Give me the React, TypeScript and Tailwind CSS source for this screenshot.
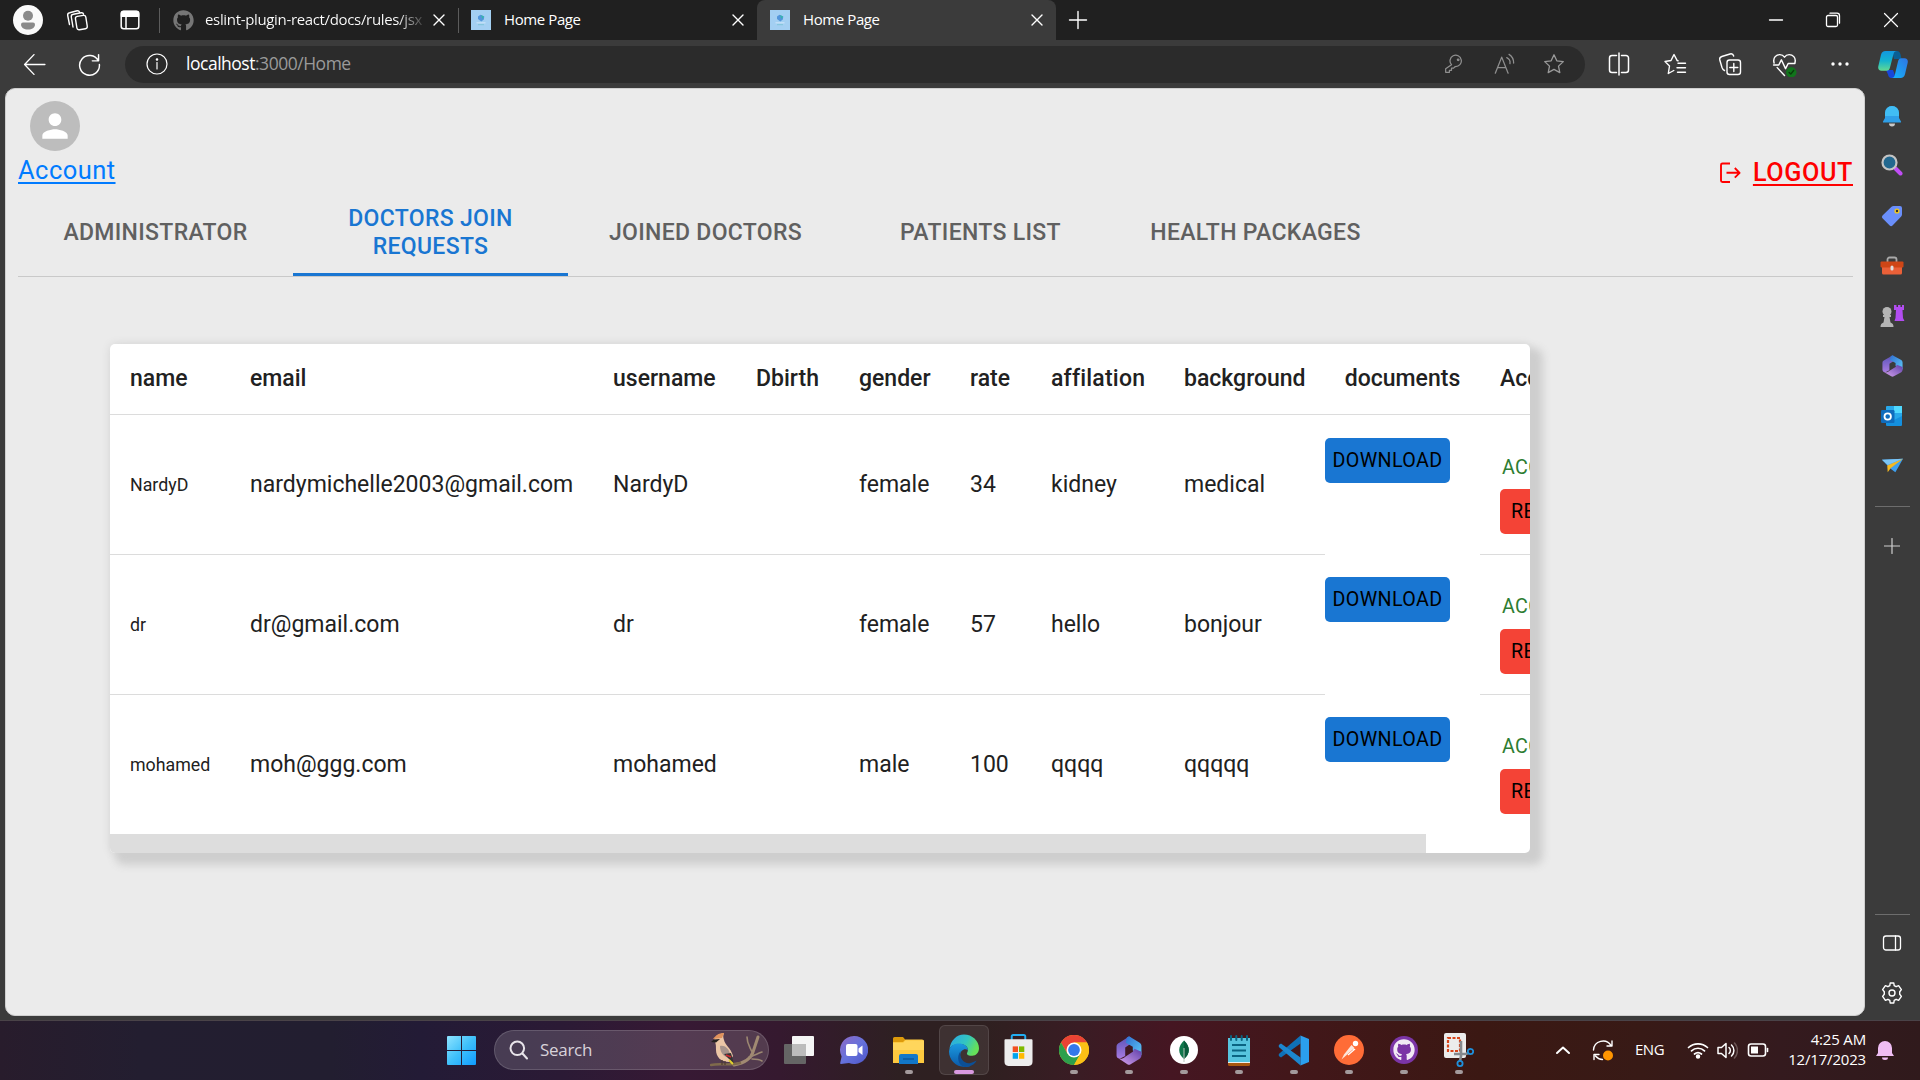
import React from 'react';
import { FaGithub } from 'react-icons/fa';
import { MdPerson } from 'react-icons/md';

type P = { children?: React.ReactNode; c?: string };

const I = ({ s = 24, vb = '0 0 24 24', w = 1.2, c = '#fff', children }: { s?: number; vb?: string; w?: number; c?: string; children: React.ReactNode }) => (
  <svg width={s} height={s} viewBox={vb} fill="none" stroke={c} strokeWidth={w} strokeLinecap="round" strokeLinejoin="round" className="block shrink-0">
    {children}
  </svg>
);

const F = ({ w = 30, h = 30, vb, children }: { w?: number; h?: number; vb?: string; children: React.ReactNode }) => (
  <svg width={w} height={h} viewBox={vb || `0 0 ${w} ${h}`} preserveAspectRatio="none" className="block shrink-0">
    {children}
  </svg>
);

const CloseX = () => (
  <I s={12} vb="0 0 12 12" w={1.4}><path d="M1 1 11 11M11 1 1 11" /></I>
);

const Favicon = () => (
  <F w={20} h={20}>
    <rect width="20" height="20" fill="#a3cff2" />
    <path d="M7 6.500 9.500 4.800l3.800 1.700-.5 3-2.500 2L7 9z" fill="#4a8fd8" opacity=".9" />
    <path d="M10 5l3 1.500-1.500 2.500z" fill="#35b8a8" />
    <path d="M5.500 12.800h9" stroke="#c9e3f6" strokeWidth="1.200" />
    <path d="M7 14.700h6" stroke="#7fc4d8" strokeWidth="1" />
  </F>
);

const TitleBar = () => (
  <div className="relative flex h-10 shrink-0 items-center bg-[#202020] text-[15px] text-white">
    <div className="flex w-[159px] shrink-0 items-center pl-[13px]">
      <F w={30} h={30}>
        <circle cx="15" cy="15" r="15" fill="#fafafa" />
        <circle cx="15" cy="10.800" r="5" fill="#8a8a8a" />
        <path d="M8 19.500a2 2 0 0 1 2-2h10a2 2 0 0 1 2 2c0 3-3 5-7 5s-7-2-7-5z" fill="#8a8a8a" />
      </F>
      <div className="ml-[22px]">
        <I s={24} w={1.4}>
          <rect x="11" y="8" width="10.500" height="13.500" rx="2.200" transform="rotate(-9 15 14)" />
          <path d="M8 19 6.300 9a2.400 2.400 0 0 1 2-2.700l8-1.500a2 2 0 0 1 2.300 1.400M4.500 16.500 2.700 7.500a2.400 2.400 0 0 1 2-2.700l7.500-2a2 2 0 0 1 2.300 1.200" />
        </I>
      </div>
      <div className="ml-[30px]">
        <I s={22} vb="0 0 22 22" w={1.5}>
          <rect x="2.200" y="2.200" width="17.600" height="17.600" rx="2.500" />
          <path d="M2.500 4.500a2 2 0 0 1 2-2h13a2 2 0 0 1 2 2v2.700h-17z" fill="#fff" />
          <path d="M7 7v12.500" />
        </I>
      </div>
    </div>
    <div className="h-[25px] w-px bg-[#5c5c5c]" />
    <div className="flex w-[298px] items-center pl-[13px]">
      <FaGithub size={21} color="#767676" />
      <div className="ml-[11px] w-[219px] bg-linear-to-r from-white from-88% to-[#3a3a3a] bg-clip-text pb-[2px] tracking-[-0.34px] whitespace-nowrap text-transparent">eslint-plugin-react/docs/rules/jsx</div>
      <div className="ml-[9px]"><CloseX /></div>
    </div>
    <div className="h-[25px] w-px bg-[#5c5c5c]" />
    <div className="flex w-[298px] items-center pl-3">
      <Favicon />
      <div className="ml-[13px] w-[228px] pb-[2px] tracking-[-0.4px]">Home Page</div>
      <CloseX />
    </div>
    <div className="flex h-full w-[299px] items-center rounded-t-[8px] bg-[#3b3b3b] pl-[13px]">
      <Favicon />
      <div className="ml-[13px] w-[228px] pb-[2px] tracking-[-0.4px]">Home Page</div>
      <CloseX />
    </div>
    <div className="ml-[12px]"><I s={20} vb="0 0 20 20" w={1.4}><path d="M10 1.500v17M1.500 10h17" /></I></div>
    <div className="ml-auto flex items-center pr-[21px]">
      <I s={16} vb="0 0 16 16" w={1.3}><path d="M1.500 8h13" /></I>
      <div className="ml-[41px]"><I s={16} vb="0 0 16 16" w={1.3}><rect x="1.500" y="3.500" width="11" height="11" rx="1.500" /><path d="M5 1.200h7a2.500 2.500 0 0 1 2.500 2.500v7.500" /></I></div>
      <div className="ml-[42px]"><I s={16} vb="0 0 16 16" w={1.2}><path d="M1.500 1.500l13 13M14.500 1.500l-13 13" /></I></div>
    </div>
  </div>
);

const STAR = 'M12 2.800l2.800 6 6.500.8-4.800 4.500 1.300 6.500L12 17.400l-5.800 3.200 1.300-6.500L2.700 9.600l6.500-.8z';

const Copilot = () => (
  <F w={30} h={27} vb="0 0 30 27">
    <defs>
      <linearGradient id="cpA" x1="0" y1="0" x2="0" y2="1"><stop offset="0" stopColor="#1297e0" /><stop offset=".5" stopColor="#14b3cf" /><stop offset="1" stopColor="#62d992" /></linearGradient>
      <linearGradient id="cpB" x1="1" y1="0" x2="0" y2="1"><stop offset="0" stopColor="#2f74e4" /><stop offset="1" stopColor="#13b7fa" /></linearGradient>
    </defs>
    <path d="M14 0h5c2 0 3 1.300 3.500 3.300L23.500 8H16z" fill="#0a5f94" />
    <path d="M8 19h7l3 8h-4.500c-2.300 0-3-1.500-3.500-3.500z" fill="#1747d8" />
    <path d="M7.500 0h11.500c-2 0-3 1.200-3.500 3L12 16.500c-.6 2.200-1.500 3.200-3.500 3.200H3.500C.8 19.700-.2 17.800.3 15.200L3 3.800C3.800 1.200 5 0 7.500 0z" fill="url(#cpA)" />
    <path d="M22.500 27H13.500c2 0 2.800-1.200 3.300-3L20 10.500c.6-2.200 1.500-3.200 3.500-3.200h3c2.700 0 3.700 1.900 3.200 4.500L27 23.200c-.8 2.600-2 3.800-4.500 3.800z" fill="url(#cpB)" />
  </F>
);

const Cell = ({ w, children }: { w: string; children: React.ReactNode }) => (
  <div className={`flex shrink-0 items-center justify-center ${w}`}>{children}</div>
);

const Toolbar = () => (
  <div className="flex h-12 shrink-0 items-center bg-[#3b3b3b]">
    <div className="flex w-[125px] shrink-0 items-center pl-[22px]">
      <I s={25} w={1.3}><path d="M22 12H2.500M11.500 2.500 2.500 12l9 9.500" /></I>
      <div className="ml-[30px]"><I s={25} w={1.4}><path d="M20.500 8.500A9.500 9.500 0 1 0 21.500 12M20.700 2.500v6h-6" /></I></div>
    </div>
    <div className="flex h-[37px] w-[1460px] shrink-0 items-center rounded-full bg-[#2b2b2b] pl-5">
      <I s={24} w={1.200}><circle cx="12" cy="12" r="10" /><path d="M12 10.500v6.500" /><circle cx="12" cy="7.500" r=".7" fill="#fff" /></I>
      <div className="ml-[17px] pb-[2px] text-[17.500px] tracking-[-0.48px] text-white">localhost<span className="text-[#9a9a9a]">:3000/Home</span></div>
      <div className="ml-auto flex pr-[6px]">
        <Cell w="w-[50px]"><I s={20} c="#8f8f8f" vb="0 0 24 24" w={1.500}><path d="M9 12.800A6.800 6.800 0 1 1 13.500 15l-2 2H9v2.500H6.500V22H2v-4.200z" /><circle cx="17" cy="7" r="1" /></I></Cell>
        <Cell w="w-[50px]">
          <I s={22} c="#8f8f8f" w={1.400}><path d="M2.500 22 9.500 4.500 16.500 22M5 16h9M15 5a6 6 0 0 1 3.500 6.500M17.500 1.500a11 11 0 0 1 5 9.500" /></I>
        </Cell>
        <Cell w="w-[50px]"><I s={24} c="#9a9a9a" w={1.300}><path d={STAR} /></I></Cell>
      </div>
    </div>
    <div className="flex flex-1 items-center pl-[6px]">
      <Cell w="w-[56px]"><I s={24} w={1.500}><path d="M9.500 3.500H5A2.500 2.500 0 0 0 2.500 6v12A2.500 2.500 0 0 0 5 20.500h4.500M14.500 3.500H19A2.500 2.500 0 0 1 21.500 6v12a2.500 2.500 0 0 1-2.500 2.500h-4.500M12 1v22" /></I></Cell>
      <Cell w="w-[55px]"><I s={24} w={1.400}><path d="M15 8.800 14.200 8.600 11 2.500 8 8.500 2 9.500l4.500 4.500L5.300 21.500l5.500-3M15 11.200h7.500M14 15.700h8.500M14.500 20.200h8" /></I></Cell>
      <Cell w="w-[55px]"><I s={24} w={1.400}><rect x="9" y="8" width="13.500" height="14.500" rx="2.500" /><path d="M15.800 11.500v8M11.800 15.500h8M6.500 18.500C5 18 4.500 17 4 15.500L1.800 8a3 3 0 0 1 2-3.500L12 2a3 3 0 0 1 3.700 2" /></I></Cell>
      <Cell w="w-[55px]">
        <I s={25} w={1.400}>
          <path d="M2 10.500C.5 5 4.500 2.500 7.500 2.500c2 0 3.500 1 4.500 2.500 1-1.500 2.500-2.500 4.500-2.500 3 0 7 2.500 5.500 8M1.500 12.500h5l2.500-5 4 8.500 2.500-5h6.500M5 15l7 7.500" />
          <circle cx="18.500" cy="19.500" r="5" fill="#11751b" stroke="none" /><path d="M16.500 19.700l1.500 1.500 2.800-3.500" stroke="#0a3d0c" />
        </I>
      </Cell>
      <Cell w="w-[55px]"><I s={20} vb="0 0 20 20"><g fill="#fff" stroke="none"><circle cx="3" cy="10" r="1.700" /><circle cx="10" cy="10" r="1.700" /><circle cx="17" cy="10" r="1.700" /></g></I></Cell>
      <Cell w="w-[51px]"><Copilot /></Cell>
    </div>
  </div>
);

const M365 = ({ w = 24, h = 24 }: { w?: number; h?: number }) => (
  <F w={w} h={h} vb="0 0 24 24">
    <defs>
      <linearGradient id="mA" x1="0" y1="0" x2="0" y2="1"><stop offset="0" stopColor="#5b54b8" /><stop offset="1" stopColor="#a77be0" /></linearGradient>
      <linearGradient id="mB" x1="0" y1="0" x2="1" y2="1"><stop offset="0" stopColor="#2f6fd0" /><stop offset="1" stopColor="#5ec9f8" /></linearGradient>
      <linearGradient id="mC" x1="0" y1="1" x2="1" y2="0"><stop offset="0" stopColor="#d6a3ee" /><stop offset="1" stopColor="#5d3ea8" /></linearGradient>
    </defs>
    <path d="M12 .5 3.500 5.300C1.500 6.300.5 7 .5 8.700v7.500c0 1.500 1.500 3 3.500 2.500L8.500 16.500V9.500l5-3V1z" fill="url(#mA)" />
    <path d="M10 1.300 12 .3l9.500 5c1.300.7 2 1.700 2 3v7.500L15.500 12V8.800L9 5.500z" fill="url(#mB)" />
    <path d="M23.500 13v3c0 1.300-.7 2.300-2 3L13.500 23.300c-1 .6-2 .6-3 0L2.500 18.700c2.500.5 4 0 6-1.500l7-4.200 1.500-2.500z" fill="url(#mC)" />
  </F>
);

const Side = ({ h, children }: { h: string; children: React.ReactNode }) => (
  <div className={`flex shrink-0 items-center justify-center ${h}`}>{children}</div>
);

const Sidebar = () => (
  <div className="flex w-[54px] shrink-0 flex-col pt-[3px]">
    <Side h="h-[50px]">
      <F w={20} h={22}><path d="M3 8a7 7 0 0 1 14 0v5l2 3.500c.2.500 0 1-.5 1h-17c-.5 0-.7-.5-.5-1L3 13z" fill="#2f9fe8" /><path d="M3 8a7 7 0 0 1 14 0v3H3z" fill="#41bdf4" /><path d="M7 18.500h6a3 3 0 0 1-6 0z" fill="#c8c8c8" /></F>
    </Side>
    <Side h="h-[48px]">
      <F w={22} h={22}><path d="M14.500 14.500l5 5" stroke="#c04df5" strokeWidth="4" strokeLinecap="round" /><circle cx="8.500" cy="8.500" r="7" fill="#23688f" stroke="#c4c4c4" strokeWidth="2.200" /></F>
    </Side>
    <Side h="h-[53px]">
      <F w={22} h={22}>
        <path d="M12.500 1h6.500a2 2 0 0 1 2 2v6.500a3 3 0 0 1-.8 2L11.500 20.500a2 2 0 0 1-2.800 0L1.500 13.300a2 2 0 0 1 0-2.800L10.500 1.800a3 3 0 0 1 2-.8z" fill="#6a8ffb" />
        <circle cx="16" cy="6" r="1.900" fill="#333" stroke="#f2c81f" strokeWidth="1.400" />
      </F>
    </Side>
    <Side h="h-[48px]">
      <F w={24} h={20}><path d="M7.500 6V3.500a2 2 0 0 1 2-2h5a2 2 0 0 1 2 2V6" fill="none" stroke="#a9a9a9" strokeWidth="1.800" /><path d="M2 10h20v7a1.500 1.500 0 0 1-1.500 1.500h-17A1.500 1.500 0 0 1 2 17z" fill="#ea6038" /><rect x=".5" y="5.500" width="23" height="6" rx="1" fill="#cf4616" /><rect x="10.500" y="9.500" width="3" height="5" rx="1.500" fill="#dedede" /></F>
    </Side>
    <Side h="h-[51px]">
      <F w={26} h={24}><path d="M15 1h2.500v2H19V1h2.500v2H23V1h2v5h-1.500l.5 8 1.500 3H15.500l1-3 .5-8H15z" fill="#b24df0" /><g fill="#b5b5b5"><circle cx="8" cy="7.500" r="4.500" /><path d="M4 11h8v2h-1.500l1 5.500c2 .8 3 2 3 4.500h-13c0-2.500 1-3.700 3-4.500l1-5.500H4z" /></g></F>
    </Side>
    <Side h="h-[50px]"><M365 w={21} h={22} /></Side>
    <Side h="h-[50px]">
      <F w={22} h={22}><rect x="5" y="1" width="16" height="19" rx="1" fill="#28a8ea" /><rect x="13" y="1" width="8" height="7" fill="#50d9ff" /><path d="M5 11l8 4 8-4v9a1 1 0 0 1-1 1H6a1 1 0 0 1-1-1z" fill="#1490df" /><rect x="0" y="5" width="13.500" height="13" rx="1.200" fill="#0f6cbd" /><circle cx="6.700" cy="11.500" r="3.200" fill="none" stroke="#fff" strokeWidth="1.800" /></F>
    </Side>
    <Side h="h-[50px]">
      <F w={23} h={18} vb="0 0 24 20"><path d="M1 3 23 2l-8 15-5-4z" fill="#3e9fee" /><path d="M1 3 23 2 7 9z" fill="#7cc5f5" /><path d="M23 2 6.500 9.500 7 17l3-4.500z" fill="#f5b91f" /></F>
    </Side>
    <div className="mx-auto mt-[15px] h-px w-[35px] bg-[#6d6d6d]" />
    <div className="mt-[31px] flex justify-center"><I s={16} vb="0 0 16 16" w={1.200} c="#cfcfcf"><path d="M8 .5v15M.5 8h15" /></I></div>
    <div className="mx-auto mt-auto h-px w-[35px] bg-[#6d6d6d]" />
    <div className="mt-[18px] flex justify-center"><I s={20} vb="0 0 20 20" w={1.300}><rect x="1.500" y="3" width="17" height="14" rx="2.500" /><path d="M13.500 3v14" /></I></div>
    <div className="mt-[28px] mb-[15px] flex justify-center">
      <I s={24} w={1.400}>
        <circle cx="12" cy="12" r="3" />
        <path d="M9.800 4.600 10.200 2h3.600l.4 2.600 1.900 1.100L18.600 4.700l2.800 3.900-1.700 2.200v2.400l1.700 2.200-2.800 3.900-2.500-1-1.900 1.100-.4 2.600h-3.600l-.4-2.600-1.900-1.100-2.500 1-2.800-3.900 1.700-2.200v-2.400L2.600 8.600l2.800-3.900 2.500 1z" />
      </I>
    </div>
  </div>
);

type Doctor = [string, string, string, string, string, string, string];
const doctors: Doctor[] = [
  ['NardyD', 'nardymichelle2003@gmail.com', 'NardyD', 'female', '34', 'kidney', 'medical'],
  ['dr', 'dr@gmail.com', 'dr', 'female', '57', 'hello', 'bonjour'],
  ['mohamed', 'moh@ggg.com', 'mohamed', 'male', '100', 'qqqq', 'qqqqq'],
];

const GRID = 'grid grid-cols-[120px_363px_143px_103px_111px_81px_133px_161px_155px_200px]';

const T = ({ children, c = '' }: P) => <div className={`flex items-center pl-5 ${c}`}>{children}</div>;

const DoctorsTable = () => (
  <div className="mt-[67px] ml-[105px] h-[509px] w-[1420px] rounded-[5px] bg-white shadow-[9px_8px_8px_4px_#cecece,0_0_10px_1px_rgba(0,0,0,0.07)]">
    <div className="flex h-full w-full flex-col overflow-hidden rounded-[5px] text-[23px] text-[#212121]">
      <div className={`${GRID} h-[71px] w-[1570px] shrink-0 border-b border-[#dcdcdc] font-medium`}>
        <T>name</T><T>email</T><T>username</T><T>Dbirth</T><T>gender</T><T>rate</T><T c="tracking-[0.2px]">affilation</T><T>background</T>
        <div className="flex items-center justify-center">documents</div>
        <T>Accept/Reject</T>
      </div>
      {doctors.map((d, i) => {
        const b = i < 2 ? 'border-b border-[#dcdcdc]' : '';
        const up = i === 2 ? '' : i === 0 ? `pt-[2px] ${b}` : `pt-[1px] ${b}`;
        return (
          <div key={d[0]} className={`${GRID} h-[140px] w-[1570px] shrink-0`}>
            <T c={`pt-[1px] text-[17.800px] ${b}`}>{d[0]}</T>
            <T c={up}>{d[1]}</T>
            <T c={up}>{d[2]}</T>
            <T c={b} />
            <T c={up}>{d[3]}</T>
            <T c={up}>{d[4]}</T>
            <T c={up}>{d[5]}</T>
            <T c={up}>{d[6]}</T>
            <div className={i === 0 ? 'pt-[23px]' : 'pt-[22px]'}>
              <button className="flex h-[45px] w-[125px] items-center justify-center rounded-[5px] bg-[#1976d2] pt-[1px] text-[19.700px] tracking-[0.350px] text-black">DOWNLOAD</button>
            </div>
            <div className={`flex flex-col items-start pl-5 text-[19.700px] tracking-[0.350px] ${i === 0 ? 'pt-[38px]' : 'pt-[37px]'} ${b}`}>
              <button className="h-[28px] pt-[1px] pl-[2px] leading-[27px] text-[#2e7d32]">ACCEPT</button>
              <button className={`h-[45px] rounded-[5px] bg-[#f44336] px-[11px] pt-[1px] text-black ${i === 0 ? 'mt-[8px]' : 'mt-[9px]'}`}>REJECT</button>
            </div>
          </div>
        );
      })}
      <div className="mt-[-1px] h-[19px] w-[1316px] bg-[#ddd]" />
    </div>
  </div>
);

const tabs = ['ADMINISTRATOR', 'DOCTORS JOIN REQUESTS', 'JOINED DOCTORS', 'PATIENTS LIST', 'HEALTH PACKAGES'];

const Page = () => (
  <div className="ml-[5px] h-[928px] w-[1860px] shrink-0 overflow-hidden rounded-[10px] border border-[#cfcfcf] bg-[#ebebeb] font-['Roboto',sans-serif]">
    <div className="flex h-[96px] justify-between pr-[11px] pl-[12px]">
      <div>
        <div className="mt-3 ml-3 flex h-[50px] w-[50px] items-center justify-center rounded-full bg-[#bdbdbd]"><MdPerson size={38} color="#fff" /></div>
        <div className="mt-[1px] text-[25.500px] leading-[37px] tracking-[0.450px] text-[#007bff] underline decoration-2 underline-offset-[3px]">Account</div>
      </div>
      <div className="mt-[65px] flex h-[38px] items-center text-[25.200px] font-medium tracking-[0.600px] text-[#f00]">
        <div className="mr-3"><I s={22} vb="0 0 22 22" w={1.9} c="#f00"><path d="M11 1.500H3.500A1.500 1.500 0 0 0 2 3v15.500A1.500 1.500 0 0 0 3.500 20H11M7.500 10.800h12.500M15.800 6l4.800 4.800-4.800 4.800" strokeLinecap="butt" /></I></div>
        <span className="underline decoration-2 underline-offset-[3px]">LOGOUT</span>
      </div>
    </div>
    <div className="ml-[12px] mr-[11px] flex h-[92px] border-b border-[#c9c9c9]">
      {tabs.map((t, i) => (
        <div key={t} className={`relative flex w-[275px] items-center justify-center px-2 pt-[5px] text-center text-[23px] leading-[28px] font-medium tracking-[0.320px] whitespace-nowrap ${i === 1 ? 'text-[#1976d2]' : 'text-[#606060]'}`}>
          {i === 1 ? <span>DOCTORS JOIN<br />REQUESTS</span> : t}
          {i === 1 && <div className="absolute inset-x-0 bottom-0 h-[3px] bg-[#1976d2]" />}
        </div>
      ))}
    </div>
    <div className="-ml-px"><DoctorsTable /></div>
  </div>
);

const TaskApp = ({ children, running = true, active = false }: { children: React.ReactNode; running?: boolean; active?: boolean }) => (
  <div className="flex w-[55px] shrink-0 justify-center">
    <div className={`relative flex h-[50px] w-[50px] items-center justify-center rounded-md ${active ? 'border border-white/10 bg-white/8' : ''}`}>
      {children}
      {running && <div className={`absolute h-1 rounded-full ${active ? 'bottom-0 w-5 bg-[#d99ae0]' : 'bottom-[1px] w-2 bg-[#a39a9c]'}`} />}
    </div>
  </div>
);

const Taskbar = () => (
  <div className="flex h-[60px] shrink-0 items-center border-t border-[#4a4348] bg-[linear-gradient(90deg,#281c2c_0px,#231e30_140px,#221e30_330px,#231b36_420px,#2b1a35_560px,#371934_680px,#35192f_780px,#2e2022_900px,#2e2020_980px,#3a1c24_1080px,#451622_1170px,#42171a_1290px,#3b1813_1480px,#381a16_1640px,#341a1e_1780px,#301a1c_1920px)] pb-[1px] text-white">
    <div className="flex w-[494px] shrink-0 pl-[447px]">
      <F w={29} h={29}>
        <defs><linearGradient id="wn" x1="0" y1="0" x2="29" y2="29" gradientUnits="userSpaceOnUse"><stop offset="0" stopColor="#8fe4ff" /><stop offset=".5" stopColor="#3fc0fa" /><stop offset="1" stopColor="#0f9bff" /></linearGradient></defs>
        <path d="M0 1a1 1 0 0 1 1-1h13v14H0zM15 0h13a1 1 0 0 1 1 1v13H15zM0 15h14v14H1a1 1 0 0 1-1-1zM15 15h14v13a1 1 0 0 1-1 1H15z" fill="url(#wn)" />
      </F>
    </div>
    <div className="flex h-10 w-[275px] shrink-0 items-center rounded-full border border-white/15 bg-white/15 pl-[14px]">
      <I s={20} vb="0 0 20 20" w={2} c="#e8e4ea"><circle cx="8.300" cy="8.300" r="6.800" /><path d="M13.500 13.500l4.500 5" /></I>
      <div className="ml-[11px] text-[17px] tracking-[-0.3px] text-[#d8d2da]">Search</div>
      <div className="ml-auto pr-1">
        <F w={54} h={36}>
          <path d="M24 33c10-2 17-6 19-13l5-15" fill="none" stroke="#a18a72" strokeWidth="3" strokeLinecap="round" />
          <path d="M42 20c-2-5-5-8-5-15M39 25c5-1 9-4 13-5M42 27c4 0 7 0 10 2" fill="none" stroke="#9c8872" strokeWidth="1.600" strokeLinecap="round" />
          <path d="M1 33c9-2 18 1 29-2" stroke="#7f6a4c" strokeWidth="2.400" fill="none" strokeLinecap="round" />
          <path d="M4 9C5 4 8 2 14 1c-1 3-1 4 0 7 1 5 7 8 9 16l-4 6c-8 0-13-5-13-12 0-5 0-7-2-9z" fill="#ecc6a6" />
          <path d="M3 7c3-4 6-6 11-6l-2 5z" fill="#e0925c" />
          <path d="M1 10l3-2.500 6-.5-4 3.500z" fill="#26211f" />
          <path d="M10 14c6-1 10 4 11 12-6 0-11-4-11-12z" fill="#a7938b" />
          <path d="M14 22l10 10-3-11z" fill="#343434" />
          <path d="M16 23l5 2" stroke="#d3262d" strokeWidth="1.800" />
          <path d="M19 28l4 4" stroke="#e3d22f" strokeWidth="2" />
          <path d="M12 28v5M15 29v4" stroke="#4d3c31" strokeWidth="1.200" />
        </F>
      </div>
    </div>
    <div className="ml-[2px] flex">
      <TaskApp running={false}>
        <F w={30} h={28}><rect x="0" y="8" width="22" height="20" rx="1" fill="#656565" /><rect x="8" y="0" width="22" height="20" rx="1" fill="#f5f5f5" /><rect x="8" y="8" width="14" height="12" fill="#bcbcbc" /></F>
      </TaskApp>
      <TaskApp running={false}>
        <F w={28} h={28}>
          <defs><linearGradient id="ch" x1="0" y1="0" x2="1" y2="1"><stop offset="0" stopColor="#9069c4" /><stop offset=".5" stopColor="#6672dc" /><stop offset="1" stopColor="#4d55c9" /></linearGradient></defs>
          <path d="M14 0a14 14 0 1 1-5 27L1 28c-.7 0-1-.5-.8-1l1.400-6.500A14 14 0 0 1 14 0z" fill="url(#ch)" /><rect x="6" y="8" width="11.500" height="12" rx="2" fill="#fff" /><path d="M18.500 12.500l4-3v9.500l-4-3z" fill="#fff" />
        </F>
      </TaskApp>
      <TaskApp>
        <F w={31} h={28}><path d="M0 2.500A1.500 1.500 0 0 1 1.500 1H10l3 3.500-3 3H0z" fill="#dd9a0b" /><path d="M0 6h10l2.500-2.500H29a2 2 0 0 1 2 2V27H0z" fill="#fdc93f" /><path d="M0 7h10l2.500-2.500H31V14H0z" fill="#ffd65c" /><path d="M6 20a2 2 0 0 1 2-2h15a2 2 0 0 1 2 2v8H6z" fill="#1277c9" /><path d="M10 23h11" stroke="#0a4f92" strokeWidth="1.200" /></F>
      </TaskApp>
      <TaskApp active>
        <F w={30} h={33} vb="0 0 31 31">
          <defs>
            <linearGradient id="eA" x1="0" y1="0" x2="1" y2=".4"><stop offset="0" stopColor="#2aa5e6" /><stop offset=".6" stopColor="#33c6c0" /><stop offset="1" stopColor="#65e05a" /></linearGradient>
            <linearGradient id="eB" x1="0" y1="0" x2="0" y2="1"><stop offset="0" stopColor="#1b9ae0" /><stop offset="1" stopColor="#0b59a8" /></linearGradient>
          </defs>
          <path d="M.5 14A15 15 0 0 1 15.500.5C24 .5 31 6.500 31 13.500c0 4-3 7-7 7-3.500 0-5.500-1-5.500-2.200 0-.8 1-1.200 1-3.300 0-3-3.500-5.500-8-5.500C6 9.500 2 11 .5 14z" fill="url(#eA)" />
          <path d="M.5 14c1.500-3 5-5 9.500-5 5 0 9.500 2.500 9.500 6-3-2-8 0-8 5 0 6 6 11 12 9.500-2.500 1.300-5 1.500-7.500 1.500C7 31 0 24 0 16.500z" fill="url(#eB)" />
          <path d="M12 16c-2 7 4 12 9 11.500 3-.3 5.500-1.500 7.500-2.500-2 4-7 6-12 6C10 30 7 22 12 16z" fill="#0c4f96" />
        </F>
      </TaskApp>
      <TaskApp running={false}>
        <F w={29} h={32} vb="0 0 30 31"><path d="M8 7V2.500a1.500 1.500 0 0 1 1.500-1.500h11A1.500 1.500 0 0 1 22 2.500V7" fill="none" stroke="#22aef2" strokeWidth="2" /><path d="M.5 6a1 1 0 0 1 1-1h27a1 1 0 0 1 1 1v21a4 4 0 0 1-4 4h-21a4 4 0 0 1-4-4z" fill="#ededed" /><path d="M9 12h5.500v5.500H9z" fill="#f25022" /><path d="M15.500 12H21v5.500h-5.500z" fill="#7fba00" /><path d="M9 18.500h5.500V24H9z" fill="#00a4ef" /><path d="M15.500 18.500H21V24h-5.500z" fill="#ffb900" /></F>
      </TaskApp>
      <TaskApp>
        <F w={30} h={30}><circle cx="15" cy="15" r="15" fill="#f9c31f" /><path d="M2 7.500A15 15 0 0 1 28 7.500H15L8.500 18.800z" fill="#ea4335" /><path d="M2 7.500A15 15 0 0 0 15 30l6.500-11.200h-13z" fill="#2da04c" /><path d="M15 7.500h13A15 15 0 0 1 15 30l6.500-11.200z" fill="#fbc116" /><circle cx="15" cy="15" r="7.500" fill="#fff" /><circle cx="15" cy="15" r="5.900" fill="#3478eb" /></F>
      </TaskApp>
      <TaskApp><M365 w={26} h={29} /></TaskApp>
      <TaskApp>
        <F w={28} h={28}><circle cx="14" cy="14" r="14" fill="#fff" /><path d="M14 4.500c3 3 4.800 6 4.800 9.500S17 20.500 14 23c-3-2.500-4.800-5.500-4.800-9S11 7.500 14 4.500z" fill="#10774b" /><path d="M14 4.500c3 3 4.800 6 4.800 9.500S17 20.500 14 23z" fill="#0a5c3b" /><path d="M14 12v14" stroke="#b8c4bb" strokeWidth="1" /></F>
      </TaskApp>
      <TaskApp>
        <F w={24} h={31}><rect x="1" y="26" width="22" height="5" rx="1.500" fill="#a9560f" /><rect x="1" y="24" width="22" height="4" fill="#eee" /><path d="M1 3h22v24H1z" fill="#57c4de" /><path d="M5 10h14M5 15.500h14M5 21h14" stroke="#0a6482" strokeWidth="2" /><path d="M4 1v4M9.300 1v4M14.700 1v4M20 1v4" stroke="#0a6482" strokeWidth="2" strokeLinecap="round" /></F>
      </TaskApp>
      <TaskApp>
        <F w={31} h={31}>
          <path d="M22.500.5.800 19v2L3 22.500 22.500 8.500z" fill="#0f70b7" />
          <path d="M22.500 30.500.800 12v-2L3 8.500l19.500 14z" fill="#1c86cf" />
          <path d="M22.500.500 31 4v23l-8.500 3.500z" fill="#2b9fee" />
        </F>
      </TaskApp>
      <TaskApp>
        <F w={30} h={30}><circle cx="15" cy="15" r="15" fill="#ff6c37" /><path d="M17 13l3.500 1.500-6.500 5.500" stroke="#fff" strokeWidth="1.200" fill="none" /><path d="M17.500 10l3 3-9 8-4 3.500 2.500-5z" fill="#fde5da" /><circle cx="21.500" cy="8.500" r="2.700" fill="#fff" /></F>
      </TaskApp>
      <TaskApp>
        <div className="flex h-7 w-7 items-center justify-center overflow-hidden rounded-full bg-[#7b35a6]"><FaGithub size={22} color="#f1eaf5" /></div>
      </TaskApp>
      <TaskApp>
        <F w={31} h={34}><rect x="1" y="0" width="22" height="25" rx="2" fill="#ececec" /><rect x="5" y="5" width="12" height="13" fill="none" stroke="#d8441a" strokeWidth="2.200" strokeDasharray="3 1.500" /><path d="M18 8v15l-1 5M11 21h12l3-1.500" fill="none" stroke="#85898e" strokeWidth="2.600" /><circle cx="27.500" cy="18.500" r="2.700" fill="none" stroke="#1f90dc" strokeWidth="1.800" /><circle cx="17" cy="30.500" r="2.600" fill="none" stroke="#1f90dc" strokeWidth="1.800" /></F>
      </TaskApp>
    </div>
    <div className="ml-auto flex items-center pr-[26px]">
      <I s={16} vb="0 0 16 16" w={2}><path d="M2 11 8 5.500l6 5.500" /></I>
      <div className="ml-[21px]"><I s={22} vb="0 0 22 22" w={1.400}><path d="M1.500 11A9.500 9.500 0 0 1 19 6.500M20 2v5h-5M2 20.500v-5h5M3.500 17a9.500 9.500 0 0 0 7 3.500" /><circle cx="16" cy="16.500" r="5" fill="#ff9500" stroke="none" /></I></div>
      <div className="ml-[21px] w-[29px] pb-[1px] text-[15px] tracking-[-0.5px]">ENG</div>
      <div className="ml-[23px]"><I s={22} vb="0 0 22 22" w={1.700}><path d="M1.500 8.500a14 14 0 0 1 19 0M4.500 11.800a9.500 9.500 0 0 1 13 0M7.500 15a5.500 5.500 0 0 1 7 0" /><circle cx="11" cy="17.500" r="1.400" fill="#fff" /></I></div>
      <div className="ml-[8px]"><I s={21} vb="0 0 21 21" w={1.500}><path d="M1 7.500h3.500L9 3.500v14l-4.500-4H1zM12 7.500a4 4 0 0 1 0 6M14.500 5a7.500 7.500 0 0 1 0 11" /><path d="M17.500 3a11 11 0 0 1 0 15" stroke="#6b5555" /></I></div>
      <div className="ml-[9px]"><I s={22} vb="0 0 22 22" w={1.600}><rect x="1.500" y="5" width="17" height="12" rx="2.500" /><rect x="4" y="7.500" width="7" height="7" fill="#fff" stroke="none" /><path d="M20.500 9.500v3" /></I></div>
      <div className="ml-[17px] w-[80px] pb-[3px] text-right text-[15px] leading-5 tracking-[-0.18px] whitespace-nowrap">4:25 AM<br />12/17/2023</div>
      <div className="ml-[10px]"><F w={18} h={20}><path d="M2 8a7 7 0 0 1 14 0v5l2 3H0l2-3z" fill="#efbdf3" /><path d="M6 17.500h6a3 2.500 0 0 1-6 0z" fill="#efbdf3" /></F></div>
    </div>
  </div>
);

export default function App() {
  return (
    <div className="flex h-[1080px] w-[1920px] flex-col overflow-hidden bg-[#3b3b3b] font-['Open_Sans',sans-serif]">
      <TitleBar />
      <Toolbar />
      <div className="flex h-[932px] shrink-0">
        <Page />
        <Sidebar />
      </div>
      <Taskbar />
    </div>
  );
}
